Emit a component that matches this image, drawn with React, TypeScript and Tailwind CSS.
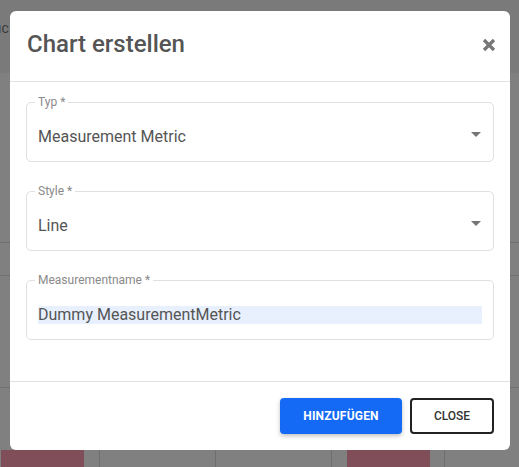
import React from "react";

const font = { fontFamily: "Roboto, 'Liberation Sans', sans-serif" };

function Field({ label, value, select, highlight }: { label: string; value: string; select?: boolean; highlight?: boolean }) {
  return (
    <div className="relative h-[60px] rounded-[5px] border border-[#e0e0e0] flex items-center pl-[11px] pr-[11px]">
      <span className="absolute left-[8px] top-[-8px] bg-white px-[3px] text-[12px] leading-[14px] text-[#8a8a8a]">
        {label}
      </span>
      <div className="flex-1 flex items-center mt-[9px]">
        <span
          className={
            "text-[16px] leading-[18px] text-[#555] " +
            (highlight ? "bg-[#e8f0fe] text-[#222] w-full block" : "")
          }
        >
          {value}
        </span>
      </div>
      {select && (
        <svg width="10" height="5" viewBox="0 0 10 5" className="ml-2 mr-[1px] mt-[4px]">
          <path d="M0 0 L10 0 L5 5 Z" fill="#757575" />
        </svg>
      )}
    </div>
  );
}

export default function App() {
  return (
    <div className="relative w-[519px] h-[467px] overflow-hidden bg-[#808080]" style={font}>
      {/* background page (dimmed) */}
      <div className="flex flex-col h-full">
        <div className="h-[73px] bg-[#7a7a7a] flex items-start pt-[18px]">
          <span className="text-[14px] text-[#3a3a3a] ml-[-2px]">ıc</span>
        </div>
        <div className="h-[169px]" />
        <div className="h-px bg-[#707070]" />
        <div className="h-[32px]" />
        <div className="h-px bg-[#707070]" />
        <div className="h-[111px]" />
        <div className="h-px bg-[#707070]" />
        <div className="h-[62px]" />
        <div className="flex flex-1">
          <div className="w-[100px] border-r border-[#6e6e6e] pl-px"><div className="w-[83px] h-full bg-[#7f4e58]" /></div>
          <div className="w-[116px] border-r border-[#6e6e6e]" />
          <div className="w-[116px] border-r border-[#6e6e6e]" />
          <div className="w-[113px] border-r border-[#6e6e6e] pl-[15px]"><div className="w-[83px] h-full bg-[#7f4e58]" /></div>
          <div className="flex-1" />
        </div>
      </div>

      {/* dialog */}
      <div className="absolute left-[10px] top-[11px] w-[500px] h-[439px] bg-white rounded-[6px] flex flex-col">
        <div className="h-[71px] shrink-0 flex items-center justify-between pl-[17px] pr-[15px] border-b border-[#e0e0e0]">
          <h2 className="text-[24px] font-medium text-[#555] mt-[-4px]">Chart erstellen</h2>
          <svg width="14" height="14" viewBox="0 0 14 14" className="mt-[-2px] mr-[-1px]">
            <path d="M2 2 L12 12 M12 2 L2 12" stroke="#777" strokeWidth="3.2" strokeLinecap="butt" />
          </svg>
        </div>
        <div className="flex flex-col gap-[29px] px-[16px] pt-[20px] h-[300px] shrink-0 border-b border-[#e0e0e0]">
          <Field label="Typ *" value="Measurement Metric" select />
          <Field label="Style *" value="Line" select />
          <Field label="Measurementname *" value="Dummy MeasurementMetric" highlight />
        </div>
        <div className="flex-1 flex items-start justify-end gap-[8px] pr-[16px] pt-[16px]">
          <button className="w-[122px] h-[36px] rounded-[4px] bg-[#1469f5] text-white text-[12px] font-bold tracking-[0.2px] shadow-[0_2px_4px_rgba(0,0,0,0.25)]">
            HINZUFÜGEN
          </button>
          <button className="w-[84px] h-[36px] rounded-[4px] border-2 border-[#222] text-[#333] text-[12px] font-medium bg-white">
            CLOSE
          </button>
        </div>
      </div>
    </div>
  );
}
